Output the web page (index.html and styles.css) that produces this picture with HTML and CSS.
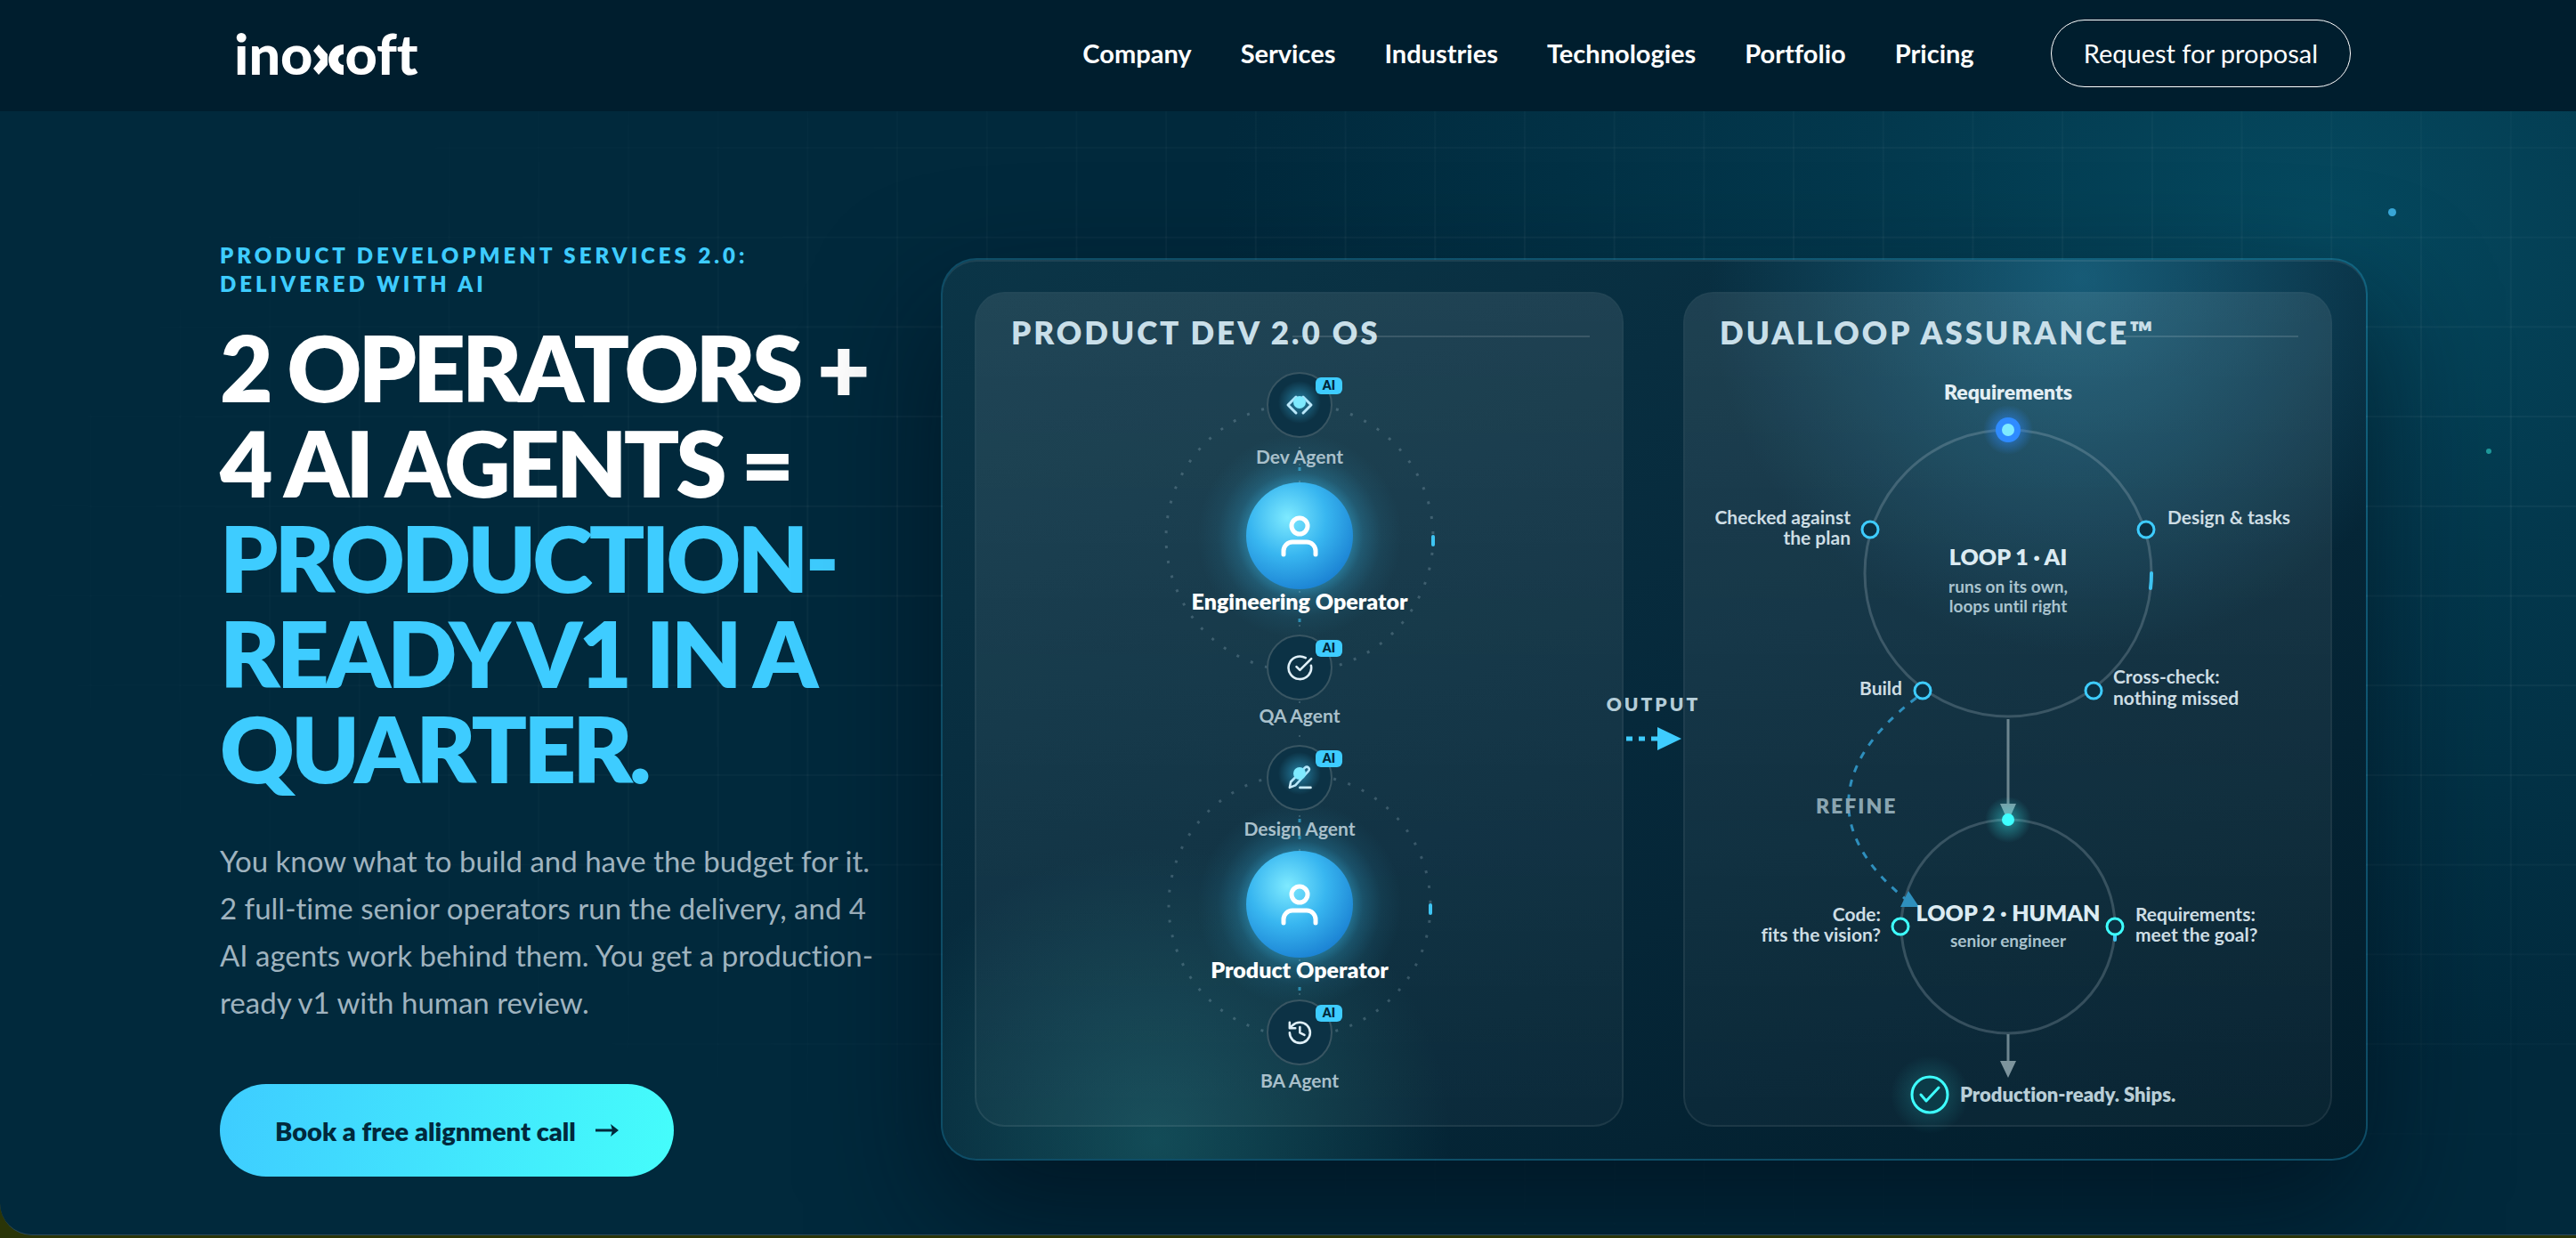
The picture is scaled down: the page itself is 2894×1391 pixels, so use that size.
FILE: index.html
```html
<!DOCTYPE html>
<html lang="en">
<head>
    <meta charset="UTF-8">
    <meta name="viewport" content="width=device-width, initial-scale=1.0">
    <title>Inoxoft - Product Development Services</title>
    <link rel="stylesheet" href="styles.css">
</head>
<body>
    <header class="header">
        <a href="#" class="logo" aria-label="inoxoft">
            <span>ino</span>
            <svg class="logo-mark" viewBox="0 0 34 34" aria-hidden="true">
                <path d="M6 0 L16 11 V23 L6 34 L0 27 L8 17 L0 7 Z" />
                <path d="M34 0 V11 A6 6 0 0 0 34 23 V34 A17 17 0 0 1 34 0 Z" />
            </svg>
            <span>oft</span>
        </a>
        <nav class="nav">
            <a href="#">Company</a>
            <a href="#">Services</a>
            <a href="#">Industries</a>
            <a href="#">Technologies</a>
            <a href="#">Portfolio</a>
            <a href="#">Pricing</a>
        </nav>
        <a href="#" class="btn-outline">Request for proposal</a>
    </header>

    <main class="hero">
        <div class="hero-grid"></div>
        <span class="spark spark-blue"></span>
        <span class="spark spark-teal"></span>

        <div class="hero-inner">
            <section class="hero-text">
                <p class="eyebrow">Product Development Services 2.0: Delivered with AI</p>
                <h1>2 operators +<br>4 AI agents =<br><span>production-<br>ready v1 in a<br>quarter.</span></h1>
                <p class="lead">You know what to build and have the budget for it. 2 full-time senior operators run the delivery, and 4 AI agents work behind them. You get a production-ready v1 with human review.</p>
                <a href="#" class="btn-primary">
                    Book a free alignment call
                    <svg class="btn-arrow" viewBox="0 0 26 16" aria-hidden="true">
                        <path d="M0 8h20" />
                        <path class="head" d="M17 1l9 7-9 7 2-7z" />
                    </svg>
                </a>
            </section>

            <section class="panel">
                <article class="card">
                    <h2 class="card-title title-os">Product Dev 2.0 OS</h2>
                    <svg class="diagram" viewBox="0 0 725 864">
                        <defs>
                            <radialGradient id="ball" cx="39%" cy="33%" r="72%">
                                <stop offset="0" stop-color="#7eeaff" />
                                <stop offset=".5" stop-color="#38b6f0" />
                                <stop offset="1" stop-color="#1a80d2" />
                            </radialGradient>
                            <radialGradient id="halo">
                                <stop offset=".5" stop-color="#3eccff" stop-opacity=".42" />
                                <stop offset=".62" stop-color="#3eccff" stop-opacity=".2" />
                                <stop offset=".8" stop-color="#3eccff" stop-opacity=".06" />
                                <stop offset="1" stop-color="#3eccff" stop-opacity="0" />
                            </radialGradient>
                            <radialGradient id="dotGlow">
                                <stop offset=".2" stop-color="#3eccff" stop-opacity=".4" />
                                <stop offset="1" stop-color="#3eccff" stop-opacity="0" />
                            </radialGradient>
                            <g id="user">
                                <circle r="115" fill="url(#halo)" />
                                <circle r="60" fill="url(#ball)" />
                                <g class="user-icon">
                                    <circle cy="-11" r="9" />
                                    <path d="M-18 21v-4a10 10 0 0 1 10-10h16a10 10 0 0 1 10 10v4" />
                                </g>
                            </g>
                            <g id="agent">
                                <circle class="agent-circle" r="36" />
                                <rect x="18" y="-31" width="30" height="19" rx="6" fill="#3eccff" />
                            </g>
                        </defs>

                        <!-- orbits -->
                        <circle class="orbit" cx="363" cy="204" r="150" />
                        <circle class="orbit" cx="363" cy="617" r="147" />
                        <path class="comet" d="M513 203v9" />
                        <path class="comet" d="M510 617v9" />

                        <!-- engineering team -->
                        <use href="#user" x="363" y="202" />
                        <path class="spoke-dots" d="M363 102v40M363 264v40M363 388v42" />
                        <path class="spoke" d="M363 125v4M363 295v4" />
                        <use href="#agent" x="363" y="55" />
                        <g class="icon" transform="translate(363 55)">
                            <path class="code-icon" d="M-4-9-13 0-4 9M4-9l9 9-9 9" />
                        </g>
                        <circle cx="363" cy="52" r="24" fill="url(#dotGlow)" />
                        <circle class="pulse" cx="363" cy="52" r="7" />
                        <use href="#agent" x="363" y="350" />
                        <g class="icon" transform="translate(348 335) scale(1.280)">
                            <path d="M21.800 10A10 10 0 1 1 17 3.300M9 11l3 3L22 4" />
                        </g>

                        <!-- product team -->
                        <use href="#user" x="363" y="616" />
                        <path class="spoke-dots" d="M363 516v40M363 678v40" />
                        <path class="spoke" d="M363 520v4M363 539v4M363 709v4" />
                        <use href="#agent" x="363" y="474" />
                        <g class="icon" transform="translate(348 458) scale(1.280)">
                            <path d="M12 21h9.500M16.500 3.500a2.100 2.100 0 0 1 3 3L8 19l-5 2 1-5Z" />
                        </g>
                        <circle cx="363" cy="469" r="24" fill="url(#dotGlow)" />
                        <circle class="pulse" cx="363" cy="469" r="7" />
                        <use href="#agent" x="363" y="760" />
                        <g class="icon" transform="translate(348 745) scale(1.280)">
                            <path d="M3 12a9 9 0 1 0 9-9 9.750 9.750 0 0 0-6.740 2.740L3 8M3 3v5h5M12 7v5l4 2" />
                        </g>

                        <g class="ai-tag">
                            <text x="396" y="38">AI</text>
                            <text x="396" y="333">AI</text>
                            <text x="396" y="457">AI</text>
                            <text x="396" y="743">AI</text>
                        </g>
                        <g class="agent-name">
                            <text x="363" y="121">Dev Agent</text>
                            <text x="363" y="412">QA Agent</text>
                            <text x="363" y="539">Design Agent</text>
                            <text x="363" y="822">BA Agent</text>
                        </g>
                        <g class="operator-name">
                            <text x="363" y="285">Engineering Operator</text>
                            <text x="363" y="699">Product Operator</text>
                        </g>
                    </svg>
                </article>

                <div class="output">
                    <span>Output</span>
                    <svg viewBox="0 0 62 26" aria-hidden="true">
                        <path d="M0 13h7M14 13h7M28 13h8" stroke="#3eccff" stroke-width="5" />
                        <path d="M35 0l27 13-27 13z" fill="#3eccff" />
                    </svg>
                </div>

                <article class="card">
                    <h2 class="card-title title-loop">DualLoop Assurance™</h2>
                    <svg class="diagram" viewBox="0 0 725 864">
                        <defs>
                            <radialGradient id="blueGlow">
                                <stop offset=".3" stop-color="#2f8bff" stop-opacity=".55" />
                                <stop offset="1" stop-color="#2f8bff" stop-opacity="0" />
                            </radialGradient>
                            <radialGradient id="aquaGlow">
                                <stop offset=".2" stop-color="#3effff" stop-opacity=".35" />
                                <stop offset="1" stop-color="#3effff" stop-opacity="0" />
                            </radialGradient>
                            <radialGradient id="readyGlow">
                                <stop offset=".45" stop-color="#3effff" stop-opacity=".12" />
                                <stop offset="1" stop-color="#3effff" stop-opacity="0" />
                            </radialGradient>
                        </defs>

                        <circle class="loop" cx="363" cy="244" r="161" />
                        <circle class="loop" cx="363" cy="641" r="120" />
                        <path class="comet" d="M524 244q0 9-1 17" />
                        <path class="comet" d="M483 650v6" />

                        <!-- loop 1 to loop 2 to shipped -->
                        <path class="flow" d="M363 408v100M363 762v34" />
                        <path class="flow-head" d="M354 503h18l-9 20zM354 792h18l-9 19z" />

                        <!-- refine -->
                        <path class="refine" d="M260 384C160 460 160 540 250 612" />
                        <path d="M251 601l12 18h-21z" fill="#2e8fbd" />

                        <circle cx="363" cy="83" r="28" fill="url(#blueGlow)" />
                        <circle cx="363" cy="83" r="14" fill="#2f8bff" />
                        <circle cx="363" cy="83" r="7" fill="#7eeaff" />
                        <circle cx="363" cy="521" r="26" fill="url(#aquaGlow)" />
                        <circle cx="363" cy="521" r="7" fill="#3effff" />

                        <g class="node">
                            <circle cx="208" cy="195" r="9" />
                            <circle cx="518" cy="195" r="9" />
                            <circle cx="267" cy="376" r="9" />
                            <circle cx="459" cy="376" r="9" />
                            <circle class="aqua" cx="242" cy="641" r="9" />
                            <circle class="aqua" cx="483" cy="641" r="9" />
                        </g>

                        <text class="start" x="363" y="49">Requirements</text>
                        <g class="step">
                            <text class="end" x="186" y="189">Checked against</text>
                            <text class="end" x="186" y="212">the plan</text>
                            <text x="542" y="189">Design &amp; tasks</text>
                            <text class="end" x="244" y="381">Build</text>
                            <text x="481" y="368">Cross-check:</text>
                            <text x="481" y="392">nothing missed</text>
                            <text class="end" x="220" y="635">Code:</text>
                            <text class="end" x="220" y="658">fits the vision?</text>
                            <text x="506" y="635">Requirements:</text>
                            <text x="506" y="658">meet the goal?</text>
                        </g>
                        <g class="loop-name">
                            <text x="363" y="235">LOOP 1 · AI</text>
                            <text x="363" y="635">LOOP 2 · HUMAN</text>
                        </g>
                        <g class="loop-note">
                            <text x="363" y="266">runs on its own,</text>
                            <text x="363" y="288">loops until right</text>
                            <text x="363" y="664">senior engineer</text>
                        </g>
                        <text class="refine-name" x="147" y="514">REFINE</text>

                        <circle cx="275" cy="830" r="44" fill="url(#readyGlow)" />
                        <circle class="ready-circle" cx="275" cy="830" r="20" />
                        <path class="ready-check" d="M265 830l6 7 14-15" />
                        <text class="ready" x="309" y="838">Production-ready. Ships.</text>
                    </svg>
                </article>
            </section>
        </div>
    </main>
</body>
</html>
```
FILE: styles.css
```css
* {
    box-sizing: border-box;
}
body {
    margin: 0;
    font-family: Lato, "Open Sans", sans-serif;
    font-variant-ligatures: none;
    background: #2a3508;
    color: white;
}
a {
    color: inherit;
    text-decoration: none;
}

/* Header */
.header {
    display: flex;
    align-items: center;
    height: 125px;
    padding: 0 253px 6px 263px;
    background: #001e2e;
}
.logo {
    display: flex;
    align-items: baseline;
    margin-right: auto;
    font-size: 63px;
    font-weight: 900;
    line-height: 76px;
}
.logo-mark {
    width: 34px;
    height: 34px;
    margin: 0 1px;
    fill: white;
}
.nav {
    display: flex;
    gap: 55px;
    margin-right: 86px;
    font-size: 29px;
    font-weight: 700;
}
.btn-outline {
    padding: 0 36px;
    border: 1px solid white;
    border-radius: 38px;
    font-size: 29px;
    line-height: 74px;
}

/* Hero */
.hero {
    position: relative;
    padding: 146px 234px 65px 247px;
    border-bottom: 1px solid #2c4a5c;
    border-bottom-left-radius: 36px;
    background:
        radial-gradient(1300px 1000px at 90% 10%, #05495f 0%, rgba(4, 66, 88, 0.6) 40%, rgba(1, 41, 60, 0) 95%),
        #01293c;
    overflow: hidden;
}
.hero-grid {
    position: absolute;
    inset: 0;
    background-image:
        linear-gradient(rgba(255, 255, 255, 0.045) 2px, transparent 2px),
        linear-gradient(90deg, rgba(255, 255, 255, 0.045) 2px, transparent 2px);
    background-size: 3.48vw 3.48vw;
    background-position: 0 40px;
    -webkit-mask-image: radial-gradient(ellipse at 70% 40%, black 30%, transparent 75%);
    mask-image: radial-gradient(ellipse at 70% 40%, black 30%, transparent 75%);
}
.spark {
    position: absolute;
    border-radius: 50%;
}
.spark-blue {
    top: 109px;
    right: 202px;
    width: 9px;
    height: 9px;
    background: #39a8d8;
}
.spark-teal {
    top: 379px;
    right: 95px;
    width: 6px;
    height: 6px;
    background: #1f9a9c;
}
.hero-inner {
    position: relative;
    display: grid;
    grid-template-columns: 744px 1fr;
    gap: 66px;
    align-items: center;
}
.eyebrow {
    margin: 0 0 24px;
    color: #3eccff;
    font-size: 24px;
    font-weight: 800;
    line-height: 32px;
    letter-spacing: 4px;
    text-transform: uppercase;
    max-width: 640px;
}
h1 {
    margin: 0 0 47px;
    font-size: 103px;
    font-weight: 800;
    line-height: 107px;
    letter-spacing: -4px;
    text-transform: uppercase;
    white-space: nowrap;
}
h1 span {
    color: #3eccff;
}
.lead {
    margin: 0 0 65px;
    color: #9fb3bf;
    font-size: 33px;
    line-height: 53px;
}
.btn-primary {
    display: inline-flex;
    align-items: center;
    gap: 22px;
    height: 104px;
    padding: 0 62px;
    border-radius: 52px;
    background: linear-gradient(100deg, #3eccff, #45fdfb);
    color: #01293c;
    font-size: 29px;
    font-weight: 800;
}
.btn-arrow {
    width: 26px;
    height: 16px;
    stroke: #01293c;
    stroke-width: 3;
}
.btn-arrow .head {
    fill: #01293c;
    stroke: none;
}

/* Panel */
.panel {
    display: grid;
    grid-template-columns: 1fr 67px 1fr;
    padding: 36px 38px 36px 36px;
    border: 2px solid rgba(62, 204, 255, 0.22);
    border-radius: 40px;
    background:
        radial-gradient(circle 420px at 80% 2%, rgba(36, 130, 165, 0.55), rgba(36, 130, 165, 0)),
        radial-gradient(circle 330px at 15% 98%, rgba(35, 120, 125, 0.45), rgba(35, 120, 125, 0)),
        linear-gradient(150deg, #0b3547 0%, #06293b 50%, #021d2b 100%);
    background-clip: padding-box;
    box-shadow: 0 60px 140px rgba(0, 12, 24, 0.6), inset 0 2px 0 rgba(255, 255, 255, 0.08);
}
.card {
    min-width: 0;
    border: 2px solid rgba(255, 255, 255, 0.1);
    border-radius: 34px;
    background: linear-gradient(180deg, rgba(255, 255, 255, 0.09), rgba(255, 255, 255, 0.03));
    background-clip: padding-box;
}
.card-title {
    position: relative;
    height: 70px;
    margin: 0;
    padding: 22px 36px 0 39px;
    color: #c9dfe9;
    font-size: 35px;
    font-weight: 800;
    line-height: 42px;
    letter-spacing: 3px;
    text-transform: uppercase;
    white-space: nowrap;
}
.card-title::after {
    content: "";
    position: absolute;
    top: 47px;
    right: 36px;
    height: 2px;
    background: rgba(255, 255, 255, 0.13);
}
.title-os::after {
    left: 49%;
}
.title-loop::after {
    left: 68%;
}
.output {
    display: flex;
    flex-direction: column;
    align-items: center;
    justify-content: center;
    gap: 14px;
    padding-top: 27px;
    color: #b4cdd8;
    font-size: 21px;
    font-weight: 800;
    line-height: 25px;
    letter-spacing: 3px;
    text-transform: uppercase;
}
.output svg {
    width: 62px;
    height: 26px;
}

/* Diagrams */
.diagram {
    display: block;
    width: 100%;
    overflow: visible;
}
.orbit {
    fill: none;
    stroke: rgba(200, 225, 235, 0.22);
    stroke-width: 3;
    stroke-dasharray: 3 14;
}
.comet {
    fill: none;
    stroke: #3ec4f2;
    stroke-width: 4;
    stroke-linecap: round;
}
.spoke {
    stroke: rgba(62, 204, 255, 0.55);
    stroke-width: 3;
}
.spoke-dots {
    stroke: rgba(200, 225, 235, 0.2);
    stroke-width: 2;
    stroke-dasharray: 2 17;
}
.agent-circle {
    fill: #0c3245;
    stroke: #385562;
    stroke-width: 2;
}
.user-icon {
    fill: none;
    stroke: white;
    stroke-width: 5;
    stroke-linecap: round;
}
.icon {
    fill: none;
    stroke: #e0f0f8;
    stroke-width: 2;
    stroke-linecap: round;
    stroke-linejoin: round;
}
.code-icon {
    stroke-width: 3;
}
.pulse {
    fill: #7eeaff;
}
.ai-tag {
    fill: #01293c;
    font-size: 14px;
    font-weight: 800;
    text-anchor: middle;
}
.agent-name {
    fill: #a9c0cb;
    font-size: 21px;
    font-weight: 700;
    text-anchor: middle;
}
.operator-name {
    fill: white;
    font-size: 25px;
    font-weight: 800;
    text-anchor: middle;
}
.loop {
    fill: none;
    stroke: rgba(200, 215, 225, 0.22);
    stroke-width: 3;
}
.flow {
    stroke: #6d858f;
    stroke-width: 3;
}
.flow-head {
    fill: #7d949d;
}
.refine {
    fill: none;
    stroke: #2e8fbd;
    stroke-width: 3;
    stroke-dasharray: 8 9;
}
.node circle {
    fill: #0b3042;
    stroke: #3eccff;
    stroke-width: 3;
}
.node .aqua {
    stroke: #3effff;
}
.start {
    fill: #e4eff4;
    font-size: 23px;
    font-weight: 800;
    text-anchor: middle;
}
.step {
    fill: #cddde4;
    font-size: 21px;
    font-weight: 700;
}
.step .end {
    text-anchor: end;
}
.loop-name {
    fill: #dcebf2;
    font-size: 25px;
    font-weight: 800;
    text-anchor: middle;
}
.loop-note {
    fill: #a9c3ce;
    font-size: 19px;
    font-weight: 700;
    text-anchor: middle;
}
.refine-name {
    fill: #8aa5b1;
    font-size: 23px;
    font-weight: 800;
    letter-spacing: 2px;
}
.ready-circle {
    fill: #0b3b48;
    stroke: #3effff;
    stroke-width: 3;
}
.ready-check {
    fill: none;
    stroke: #3effff;
    stroke-width: 3;
    stroke-linecap: round;
    stroke-linejoin: round;
}
.ready {
    fill: #b9ced7;
    font-size: 22px;
    font-weight: 800;
}
```
